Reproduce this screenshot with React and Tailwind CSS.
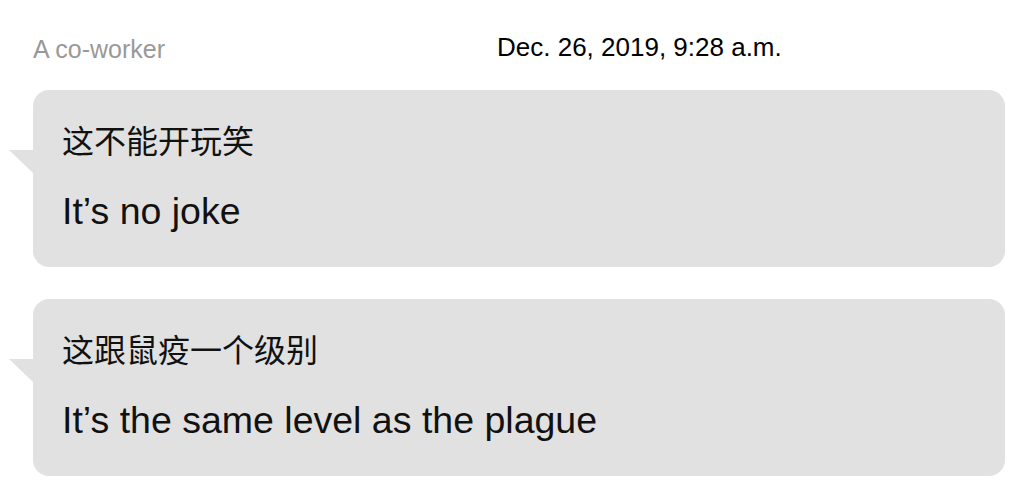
import React from "react";

const messages = [
  { zh: "这不能开玩笑", en: "It’s no joke" },
  { zh: "这跟鼠疫一个级别", en: "It’s the same level as the plague" },
];

const Bubble = ({ zh, en }) => {
  return (
    <div className="relative rounded-[16px] bg-[#e1e1e1] pl-[29px] pt-[29px] pb-[34px]">
      <svg
        className="absolute left-[-24px] top-[60px]"
        width="25"
        height="24"
        viewBox="0 0 25 24"
      >
        <polygon points="0,0 25,0 25,24" fill="#e1e1e1" />
      </svg>
      <div className="text-[32px] leading-[40px] text-[#111] font-['Noto_Sans_CJK_SC',sans-serif]">
        {zh}
      </div>
      <div className="mt-[30px] text-[37.5px] leading-[44px] text-[#111] font-['Liberation_Sans',sans-serif]">
        {en}
      </div>
    </div>
  );
};

export default function App() {
  return (
    <div className="w-[1024px] h-[496px] bg-white pl-[33px] pr-[19px] pt-[34px] font-['Liberation_Sans',sans-serif] overflow-hidden">
      <div className="flex items-baseline h-[30px]">
        <div className="w-[464px] text-[25px] leading-[30px] text-[#999]">
          A co-worker
        </div>
        <div className="text-[26px] leading-[30px] text-black relative top-[-2px]">
          Dec. 26, 2019, 9:28 a.m.
        </div>
      </div>
      <div className="mt-[26px] flex flex-col gap-[32px]">
        {messages.map((m, i) => (
          <Bubble key={i} zh={m.zh} en={m.en} />
        ))}
      </div>
    </div>
  );
}
